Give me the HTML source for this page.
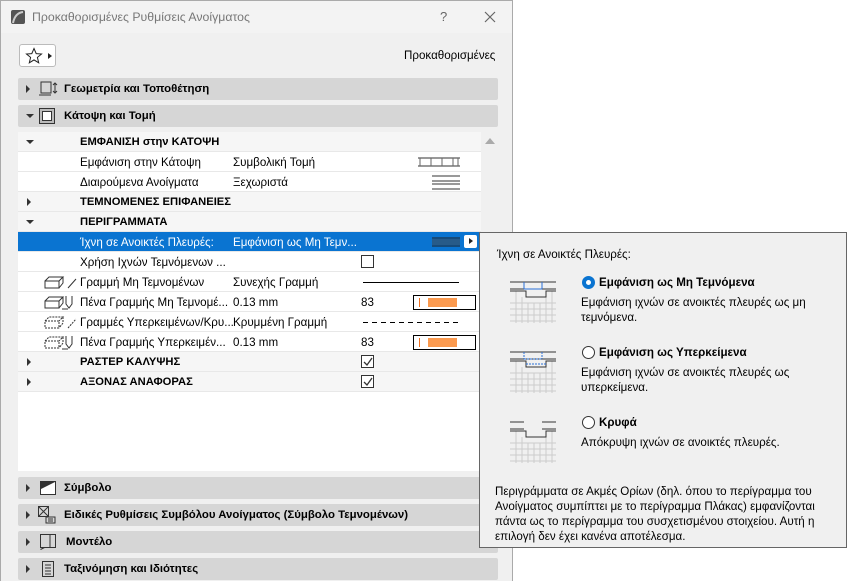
<!DOCTYPE html>
<html><head><meta charset="utf-8"><style>
*{box-sizing:border-box;margin:0;padding:0}
body{width:847px;height:581px;background:#fff;font-family:"Liberation Sans","Noto Sans CJK SC",sans-serif;font-size:11.6px;color:#000;position:relative;overflow:hidden}
.dlg{position:absolute;left:0;top:0;width:513px;height:581px;background:#f0f0f0;border:1px solid #aaa;border-bottom:none}
.title{position:absolute;left:0;top:0;width:511px;height:32px;background:#f3f3f3}
.title .t{position:absolute;left:31px;top:9px;font-size:12.3px;color:#777}
.abs{position:absolute}
.bar{position:absolute;left:17px;width:480px;height:22px;background:#d6d6d6;border-radius:2px;font-weight:bold;font-size:11.4px}
.bar .tri{position:absolute;left:8px;top:7px;width:0;height:0;border-top:4px solid transparent;border-bottom:4px solid transparent;border-left:4px solid #333}
.bar .lbl{position:absolute;left:46px;top:5px}
.grid{position:absolute;left:17px;top:131px;width:463px;height:339px;background:#fff}
.row{position:absolute;left:0;width:463px;height:20px;border-bottom:1px solid #e8e8e8}
.row.h{background:#f6f6f6;font-weight:bold;font-size:11.2px}
.row span{position:absolute;top:4px;white-space:nowrap}
.c1{left:62px}.c2{left:215px}
.down{position:absolute;left:8px;top:8px;border-left:4px solid transparent;border-right:4px solid transparent;border-top:4px solid #333}
.rt{position:absolute;left:9px;top:6px;border-top:4px solid transparent;border-bottom:4px solid transparent;border-left:4px solid #333}
.sel{background:#0a74d1;color:#fff}
.cb{position:absolute;left:343px;top:3px;width:13px;height:13px;border:1px solid #333;background:#fff}
.pen{position:absolute;left:395px;top:3px;width:63px;height:15px;border:1px solid #000;background:#fff}
.pen i{position:absolute;left:14px;top:2px;width:29px;height:9px;background:#fb9a4f}
.pen b{position:absolute;left:5px;top:2px;width:1px;height:9px;background:#f07020}
.pop{position:absolute;left:479px;top:232px;width:368px;height:316px;background:#f0f0f0;border:1px solid #666}
.pop div{position:absolute;font-size:11.6px;line-height:15px;white-space:nowrap}
.rad{position:absolute;width:13px;height:13px;border-radius:50%;border:1px solid #333;background:#fff}
</style></head><body>
<div class="dlg">
<div class="title">
<svg class="abs" style="left:10px;top:9px" width="14" height="14"><rect width="14" height="14" rx="2" fill="#555"/><path d="M2 13 Q4 3 12 2" stroke="#ccc" stroke-width="2" fill="none"/></svg>
<div class="t">Προκαθορισμένες Ρυθμίσεις Ανοίγματος</div>
<div class="abs" style="left:439px;top:8px;font-size:13px;color:#666">?</div>
<svg class="abs" style="left:483px;top:10px" width="12" height="12"><path d="M1 1L11 11M11 1L1 11" stroke="#666" stroke-width="1.2"/></svg>
</div>
<div class="abs" style="left:18px;top:43px;width:37px;height:23px;background:#fff;border:1px solid #bbb;border-radius:3px">
<svg class="abs" style="left:5px;top:2px" width="18" height="18"><path d="M9 1.5L11.2 6.6 16.5 7 12.4 10.4 13.7 15.8 9 12.9 4.3 15.8 5.6 10.4 1.5 7 6.8 6.6Z" fill="none" stroke="#222"/></svg>
<div class="abs" style="left:28px;top:8px;border-top:3.5px solid transparent;border-bottom:3.5px solid transparent;border-left:4px solid #222"></div>
</div>
<div class="abs" style="left:403px;top:48px">Προκαθορισμένες</div>

<div class="bar" style="top:77px"><div class="tri"></div>
<svg class="abs" style="left:21px;top:3px" width="20" height="16"><rect x="2" y="1" width="10" height="11" fill="none" stroke="#333"/><path d="M0 14H12M16 2V12M14 4l2-2 2 2M14 10l2 2 2-2" stroke="#333" fill="none"/></svg>
<div class="lbl">Γεωμετρία και Τοποθέτηση</div></div>
<div class="bar" style="top:104px"><div class="down" style="top:9px"></div>
<svg class="abs" style="left:21px;top:3px" width="16" height="16"><rect x="0.5" y="0.5" width="15" height="15" fill="#bbb" stroke="#333"/><rect x="3.5" y="3.5" width="9" height="9" fill="#fff" stroke="#333"/></svg>
<div class="lbl">Κάτοψη και Τομή</div></div>

<div class="grid">
<div class="row h" style="top:0"><div class="down"></div><span class="c1" style="left:62px">ΕΜΦΑΝΙΣΗ στην ΚΑΤΟΨΗ</span></div>
<div class="row" style="top:20px"><span class="c1">Εμφάνιση στην Κάτοψη</span><span class="c2">Συμβολική Τομή</span>
<svg class="abs" style="left:400px;top:5px" width="42" height="10"><path d="M0 1H42M0 9H42" stroke="#333"/><path d="M2 1V9M13 1V9M24 1V9M35 1V9M40 1V9" stroke="#666"/></svg></div>
<div class="row" style="top:40px"><span class="c1">Διαιρούμενα Ανοίγματα</span><span class="c2">Ξεχωριστά</span>
<svg class="abs" style="left:414px;top:3px" width="28" height="15"><path d="M0 1H28M0 6H28M0 9H28M0 14H28" stroke="#333"/></svg></div>
<div class="row h" style="top:60px"><div class="rt"></div><span class="c1">ΤΕΜΝΟΜΕΝΕΣ ΕΠΙΦΑΝΕΙΕΣ</span></div>
<div class="row h" style="top:80px"><div class="down"></div><span class="c1">ΠΕΡΙΓΡΑΜΜΑΤΑ</span></div>
<div class="row sel" style="top:100px"><span class="c1">Ίχνη σε Ανοικτές Πλευρές:</span><span class="c2">Εμφάνιση ως Μη Τεμν...</span>
<svg class="abs" style="left:414px;top:5px" width="28" height="10"><path d="M0 1H28M0 9H28" stroke="#222"/><path d="M0 5H28" stroke="#444" stroke-width="6" opacity=".5"/></svg>
<div class="abs" style="left:445px;top:2px;width:15px;height:15px;background:#fff;border:1px solid #0a74d1;border-radius:3px"><div class="abs" style="left:5px;top:3px;border-top:3.5px solid transparent;border-bottom:3.5px solid transparent;border-left:4px solid #222"></div></div></div>
<div class="row" style="top:120px"><span class="c1">Χρήση Ιχνών Τεμνόμενων ...</span><div class="cb"></div></div>
<div class="row" style="top:140px"><svg class="abs" style="left:26px;top:3px" width="34" height="15"><path d="M1 6h14v7H1zM1 6l4-4h14l-4 4M19 2v6l-4 5M24 13l8-9" stroke="#333" fill="none"/></svg><span class="c1">Γραμμή Μη Τεμνομένων</span><span class="c2">Συνεχής Γραμμή</span><div class="abs" style="left:345px;top:10px;width:96px;height:1px;background:#000"></div></div>
<div class="row" style="top:160px"><svg class="abs" style="left:26px;top:3px" width="34" height="15"><path d="M1 6h14v7H1zM1 6l4-4h14l-4 4M19 2v6l-4 5M22 1v8l3 4 3-4V1M18 14h6" stroke="#333" fill="none"/></svg><span class="c1">Πένα Γραμμής Μη Τεμνομέ...</span><span class="c2">0.13 mm</span><span style="left:343px">83</span><div class="pen"><b></b><i></i></div></div>
<div class="row" style="top:180px"><svg class="abs" style="left:26px;top:3px" width="34" height="15"><path d="M1 6h14v7H1zM1 6l4-4h14l-4 4M19 2v6l-4 5M24 13l8-9" stroke="#333" fill="none" stroke-dasharray="2 1"/></svg><span class="c1">Γραμμές Υπερκειμένων/Κρυ...</span><span class="c2">Κρυμμένη Γραμμή</span><div class="abs" style="left:345px;top:10px;width:96px;height:1px;background:repeating-linear-gradient(90deg,#000 0 5px,transparent 5px 9px)"></div></div>
<div class="row" style="top:200px"><svg class="abs" style="left:26px;top:3px" width="34" height="15"><path d="M1 6h14v7H1zM1 6l4-4h14l-4 4M19 2v6l-4 5" stroke="#333" fill="none" stroke-dasharray="2 1"/><path d="M22 1v8l3 4 3-4V1M18 14h6" stroke="#333" fill="none"/></svg><span class="c1">Πένα Γραμμής Υπερκειμέν...</span><span class="c2">0.13 mm</span><span style="left:343px">83</span><div class="pen"><b></b><i></i></div></div>
<div class="row h" style="top:220px"><div class="rt"></div><span class="c1">ΡΑΣΤΕΡ ΚΑΛΥΨΗΣ</span><div class="cb"><svg class="abs" style="left:1px;top:1px" width="10" height="10"><path d="M1 5l3 3 5-7" stroke="#333" fill="none" stroke-width="1.3"/></svg></div></div>
<div class="row h" style="top:240px"><div class="rt"></div><span class="c1">ΑΞΟΝΑΣ ΑΝΑΦΟΡΑΣ</span><div class="cb"><svg class="abs" style="left:1px;top:1px" width="10" height="10"><path d="M1 5l3 3 5-7" stroke="#333" fill="none" stroke-width="1.3"/></svg></div></div>
</div>
<div class="abs" style="left:484px;top:137px;border-left:5px solid transparent;border-right:5px solid transparent;border-bottom:6px solid #aaa"></div>

<div class="bar" style="top:476px"><div class="tri"></div><svg class="abs" style="left:22px;top:4px" width="16" height="14"><rect x=".5" y=".5" width="15" height="13" fill="#fff" stroke="#333"/><path d="M1 1H15L1 8Z" fill="#333"/></svg><div class="lbl">Σύμβολο</div></div>
<div class="bar" style="top:503px"><div class="tri"></div><svg class="abs" style="left:20px;top:2px" width="18" height="18"><rect x=".5" y=".5" width="10" height="10" fill="none" stroke="#333"/><path d="M1 1L10 10M10 1L1 10M8 11h9v6H8zM10 13h5M10 15h5" stroke="#333" fill="none"/></svg><div class="lbl">Ειδικές Ρυθμίσεις Συμβόλου Ανοίγματος (Σύμβολο Τεμνομένων)</div></div>
<div class="bar" style="top:530px"><div class="tri"></div><svg class="abs" style="left:22px;top:3px" width="16" height="16"><path d="M.5 .5h15v13H.5zM10 .5v13M.5 15.5l4-2" stroke="#333" fill="none"/></svg><div class="lbl" style="left:48px">Μοντέλο</div></div>
<div class="bar" style="top:557px"><div class="tri"></div><svg class="abs" style="left:24px;top:3px" width="12" height="16"><path d="M.5 .5h11v15H.5zM3 4h6M3 7h6M3 10h6M3 13h6" stroke="#333" fill="none"/></svg><div class="lbl">Ταξινόμηση και Ιδιότητες</div></div>
</div>

<div class="pop">
<div style="left:17px;top:14px">Ίχνη σε Ανοικτές Πλευρές:</div>
<svg class="abs" style="left:30px;top:48px" width="46" height="42"><g stroke="#ccc"><path d="M0 22H46M0 28H46M0 34H46M0 40H46M6 10V42M12 16V42M18 22V42M24 22V42M30 22V42M36 16V42M42 10V42"/></g><path d="M0 1H46M0 8H46M0 10H16V16H36V10H46" stroke="#333" fill="none"/><path d="M14 1V8M32 1V8M14 8H32" stroke="#2a6fd6"/></svg>
<div class="rad" style="left:102px;top:43px;border:4px solid #0a74d1"></div>
<div style="left:119px;top:42px;font-weight:bold">Εμφάνιση ως Μη Τεμνόμενα</div>
<div style="left:101px;top:62px">Εμφάνιση ιχνών σε ανοικτές πλευρές ως μη<br>τεμνόμενα.</div>
<svg class="abs" style="left:30px;top:118px" width="46" height="42"><g stroke="#ccc"><path d="M0 22H46M0 28H46M0 34H46M0 40H46M6 10V42M12 16V42M18 22V42M24 22V42M30 22V42M36 16V42M42 10V42"/></g><path d="M0 1H46M0 8H46M0 10H16V16H36V10H46" stroke="#333" fill="none"/><path d="M14 1V8M32 1V8M14 8H32M16 13H36" stroke="#2a6fd6" stroke-dasharray="2 1"/></svg>
<div class="rad" style="left:102px;top:113px"></div>
<div style="left:119px;top:112px;font-weight:bold">Εμφάνιση ως Υπερκείμενα</div>
<div style="left:101px;top:132px">Εμφάνιση ιχνών σε ανοικτές πλευρές ως<br>υπερκείμενα.</div>
<svg class="abs" style="left:30px;top:188px" width="46" height="42"><g stroke="#ccc"><path d="M0 22H46M0 28H46M0 34H46M0 40H46M6 10V42M12 16V42M18 22V42M24 22V42M30 22V42M36 16V42M42 10V42"/></g><path d="M0 1H14M32 1H46M0 8H14M32 8H46M0 10H16V16H36V10H46" stroke="#333" fill="none"/></svg>
<div class="rad" style="left:102px;top:183px"></div>
<div style="left:119px;top:182px;font-weight:bold">Κρυφά</div>
<div style="left:101px;top:202px">Απόκρυψη ιχνών σε ανοικτές πλευρές.</div>
<div style="left:15px;top:251px">Περιγράμματα σε Ακμές Ορίων (δηλ. όπου το περίγραμμα του<br>Ανοίγματος συμπίπτει με το περίγραμμα Πλάκας) εμφανίζονται<br>πάντα ως το περίγραμμα του συσχετισμένου στοιχείου. Αυτή η<br>επιλογή δεν έχει κανένα αποτέλεσμα.</div>
</div>
</body></html>
